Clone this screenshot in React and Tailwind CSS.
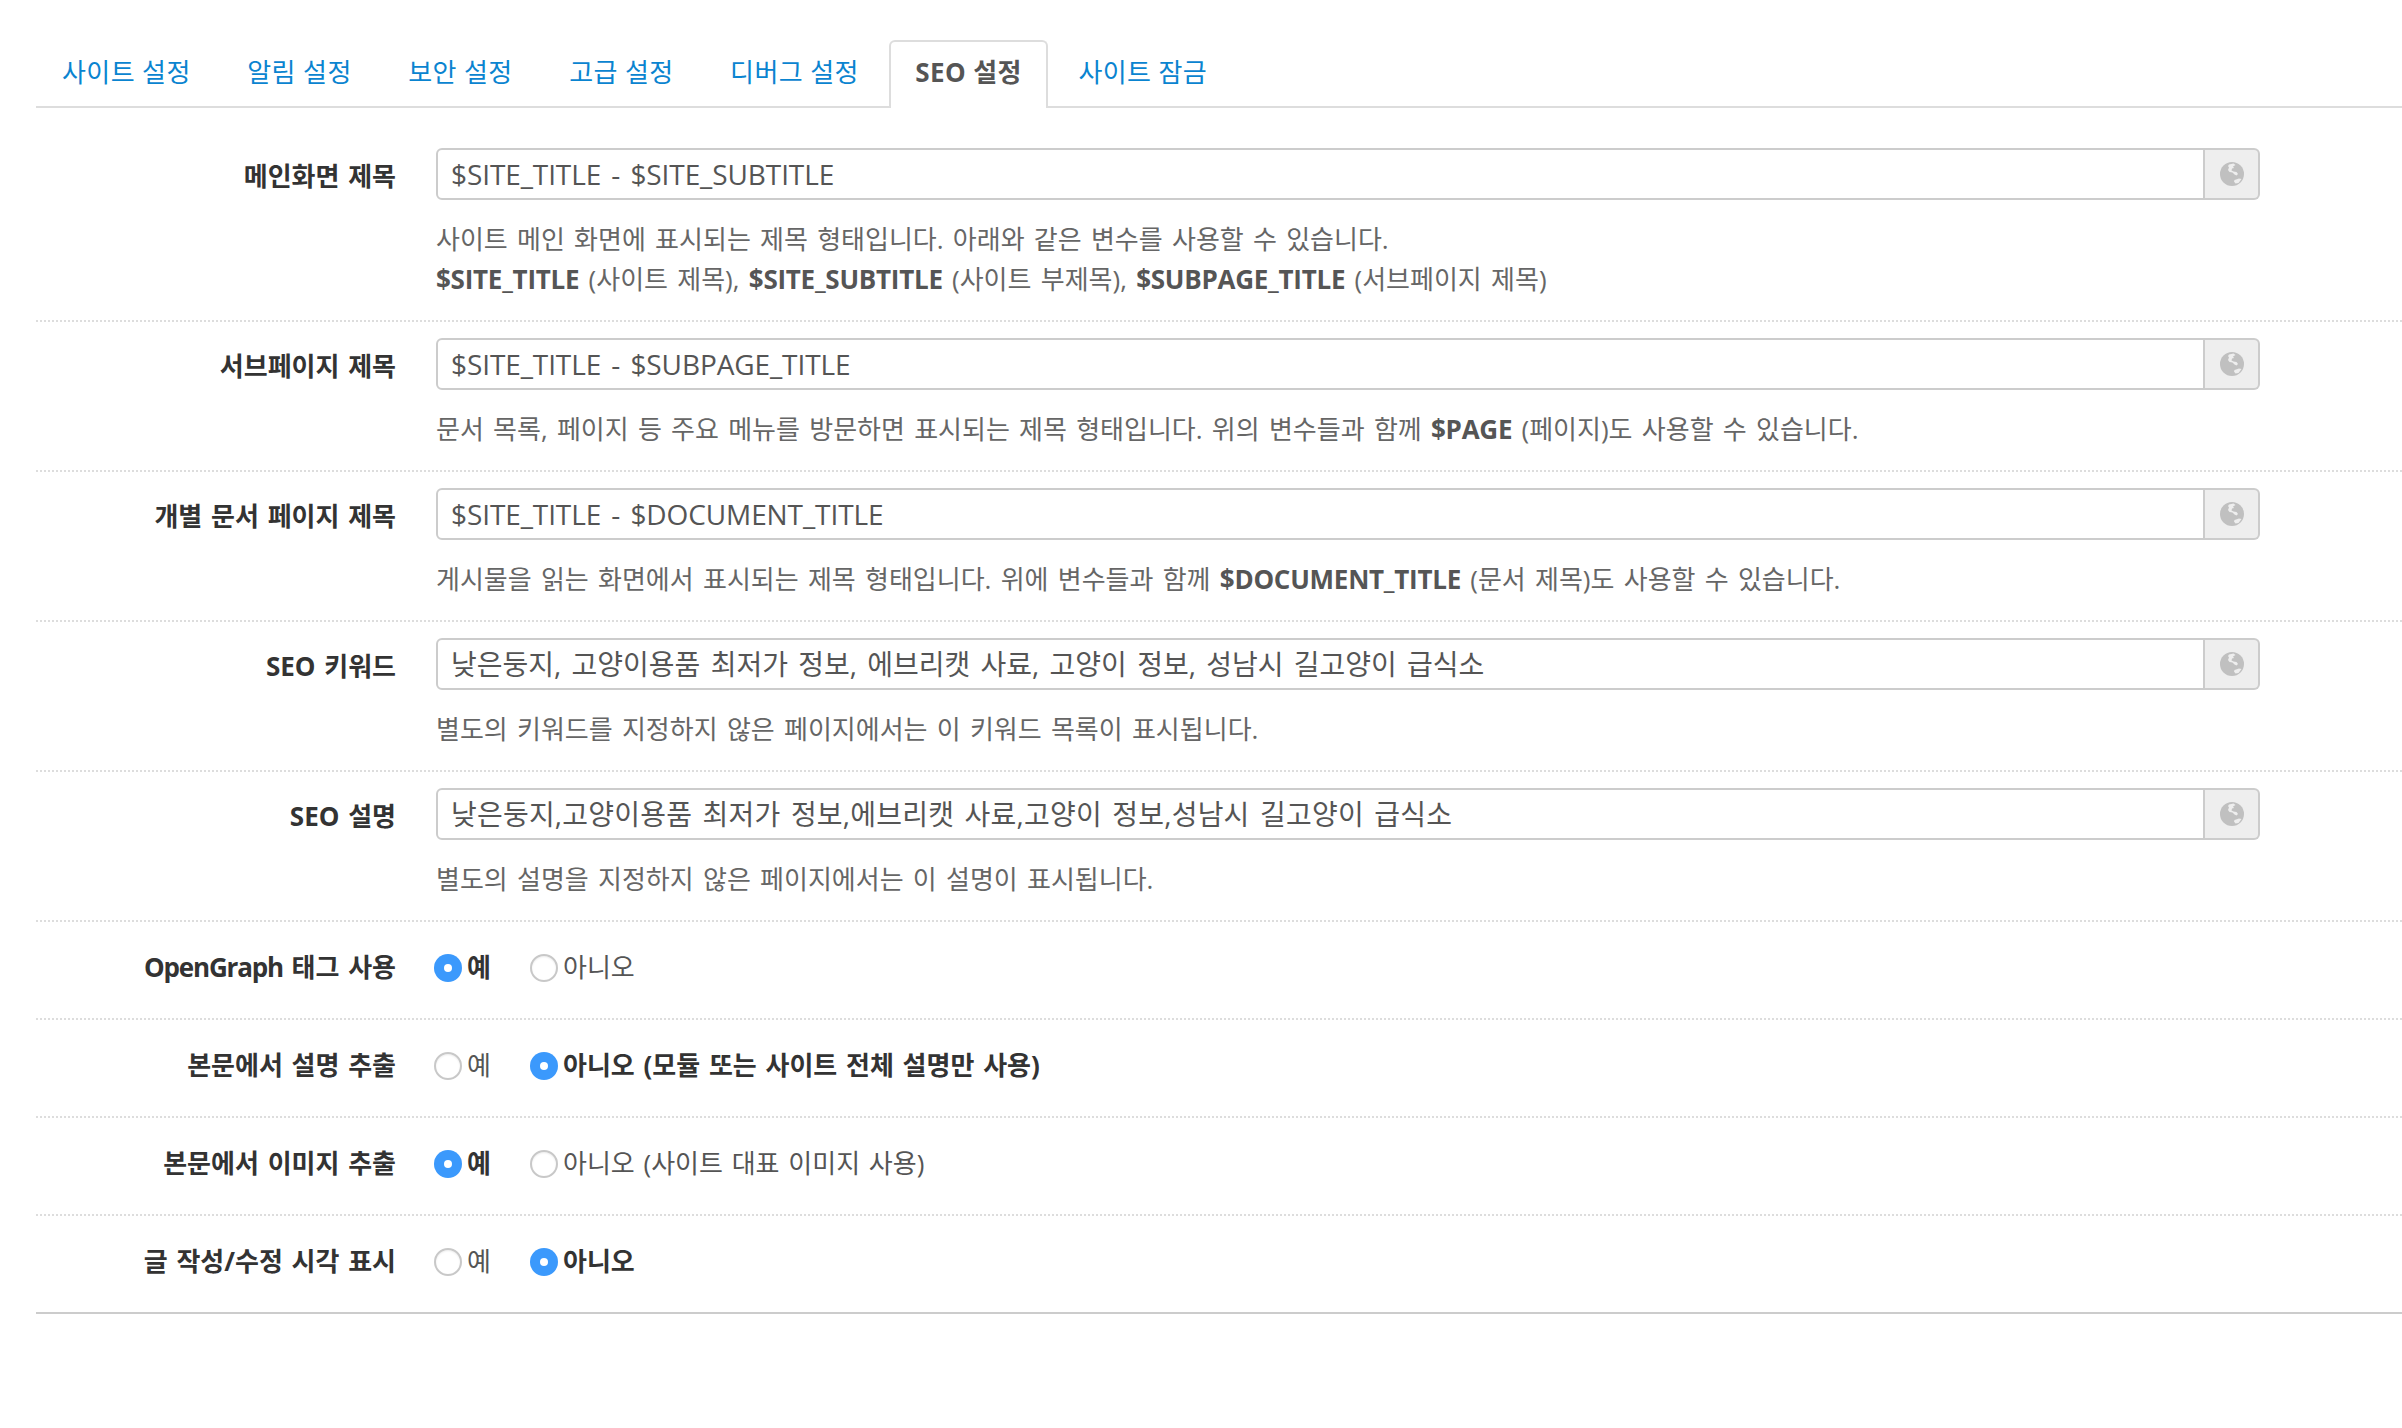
import React from "react";

const FONT = "font-['Open_Sans','Noto_Sans_CJK_KR',sans-serif]";

function Globe() {
  return (
    <svg width="26" height="26" viewBox="0 0 26 26" aria-hidden="true">
      <circle cx="13" cy="13" r="12" fill="#c0c0c0" />
      <path d="M10 3.5l4.5-1 2 1.5-2.5 1.5 1 1.5-2 .5-.5 2 2 1 3 .5 1.5 2-1.5 1.5-2-1-2-2-3-.5-1.5-2 1-2.5-1-1.5z" fill="#eeeeee" />
      <path d="M15.5 19l4.5-1.5 2.5.5-3 4-3 .5-1.5-2z" fill="#eeeeee" />
    </svg>
  );
}

function TextRow({ label, value, valueClass = "", children }) {
  return (
    <div className="flex border-b-2 border-dotted border-[#ddd] pt-[16px] pb-[21px]">
      <div className="w-[360px] shrink-0 pt-[10px] text-right text-[26px] leading-[36px] font-bold text-[#333] [word-spacing:2px]">{label}</div>
      <div className="ml-[40px] flex-1">
        <div className="flex h-[52px] w-[1824px]">
          <div className={`flex-1 rounded-l-[6px] border-2 border-[#ccc] px-[13px] text-[28px] leading-[48px] text-[#555] [word-spacing:3px] whitespace-nowrap ${valueClass}`}>{value}</div>
          <div className="flex w-[55px] items-center justify-center rounded-r-[6px] border-2 border-l-0 border-[#ccc] bg-[#eee]"><Globe /></div>
        </div>
        <div className="mt-[19px] text-[26px] leading-[40px] text-[#666] [word-spacing:2.5px]">{children}</div>
      </div>
    </div>
  );
}

function Radio({ checked, text, className = "" }) {
  return (
    <span className={`inline-flex items-center ${className}`}>
      {checked ? (
        <span className="flex h-[28px] w-[28px] items-center justify-center rounded-full bg-[#3b99fc]"><span className="h-[8px] w-[8px] rounded-full bg-white" /></span>
      ) : (
        <span className="h-[28px] w-[28px] rounded-full border-2 border-[#c8c8c8] bg-white shadow-[inset_0_1px_2px_rgba(0,0,0,0.08)]" />
      )}
      <span className={`ml-[5px] -translate-y-px text-[26px] leading-[36px] [word-spacing:2px] whitespace-nowrap ${checked ? "font-bold text-[#333]" : "text-[#555]"}`}>{text}</span>
    </span>
  );
}

function RadioRow({ label, yes, no, noText, last }) {
  return (
    <div className={`flex h-[98px] items-center pb-[4px] ${last ? "border-b-2 border-solid border-[#ccc]" : "border-b-2 border-dotted border-[#ddd]"}`}>
      <div className="w-[360px] shrink-0 -translate-y-px text-right text-[26px] leading-[36px] font-bold text-[#333] [word-spacing:2px]">{label}</div>
      <div className="ml-[38px] flex items-center">
        <Radio checked={yes} text="예" className="w-[96px]" />
        <Radio checked={no} text={noText} />
      </div>
    </div>
  );
}

function B({ children }) {
  return <b className="font-bold tracking-[-0.25px] text-[#555]">{children}</b>;
}

const tabs = ["사이트 설정", "알림 설정", "보안 설정", "고급 설정", "디버그 설정", "SEO 설정", "사이트 잠금"];

export default function App() {
  return (
    <div className={`${FONT} min-h-[1428px] bg-white pt-[40px] pl-[36px]`}>
      <div className="flex h-[68px] gap-[4.5px] border-b-2 border-[#ddd]">
        {tabs.map((t) =>
          t === "SEO 설정" ? (
            <div key={t} className="h-[68px] rounded-t-[6px] border-2 border-b-0 border-[#ddd] bg-white px-[24px] text-[26px] leading-[60px] font-bold tracking-[0.4px] text-[#555] whitespace-nowrap">{t}</div>
          ) : (
            <div key={t} className="px-[26px] text-[26px] leading-[64px] tracking-[0.4px] text-[#0a84d0] whitespace-nowrap">{t}</div>
          )
        )}
      </div>
      <div>
        <div className="pt-[24px]" />
        <TextRow label="메인화면 제목" value="$SITE_TITLE - $SITE_SUBTITLE" valueClass="tracking-[-0.1px]">
          사이트 메인 화면에 표시되는 제목 형태입니다. 아래와 같은 변수를 사용할 수 있습니다.<br />
          <B>$SITE_TITLE</B> (사이트 제목), <B>$SITE_SUBTITLE</B> (사이트 부제목), <B>$SUBPAGE_TITLE</B> (서브페이지 제목)
        </TextRow>
        <TextRow label="서브페이지 제목" value="$SITE_TITLE - $SUBPAGE_TITLE" valueClass="tracking-[-0.1px]">
          문서 목록, 페이지 등 주요 메뉴를 방문하면 표시되는 제목 형태입니다. 위의 변수들과 함께 <B>$PAGE</B> (페이지)도 사용할 수 있습니다.
        </TextRow>
        <TextRow label="개별 문서 페이지 제목" value="$SITE_TITLE - $DOCUMENT_TITLE" valueClass="tracking-[-0.1px]">
          게시물을 읽는 화면에서 표시되는 제목 형태입니다. 위에 변수들과 함께 <B>$DOCUMENT_TITLE</B> (문서 제목)도 사용할 수 있습니다.
        </TextRow>
        <TextRow label="SEO 키워드" value="낮은둥지, 고양이용품 최저가 정보, 에브리캣 사료, 고양이 정보, 성남시 길고양이 급식소">
          별도의 키워드를 지정하지 않은 페이지에서는 이 키워드 목록이 표시됩니다.
        </TextRow>
        <TextRow label="SEO 설명" value="낮은둥지,고양이용품 최저가 정보,에브리캣 사료,고양이 정보,성남시 길고양이 급식소" valueClass="tracking-[0.2px]">
          별도의 설명을 지정하지 않은 페이지에서는 이 설명이 표시됩니다.
        </TextRow>
        <RadioRow label={<><span className="tracking-[-1.2px]">OpenGraph</span> 태그 사용</>} yes noText="아니오" />
        <RadioRow label="본문에서 설명 추출" no noText="아니오 (모듈 또는 사이트 전체 설명만 사용)" />
        <RadioRow label="본문에서 이미지 추출" yes noText="아니오 (사이트 대표 이미지 사용)" />
        <RadioRow label="글 작성/수정 시각 표시" no noText="아니오" last />
      </div>
    </div>
  );
}
